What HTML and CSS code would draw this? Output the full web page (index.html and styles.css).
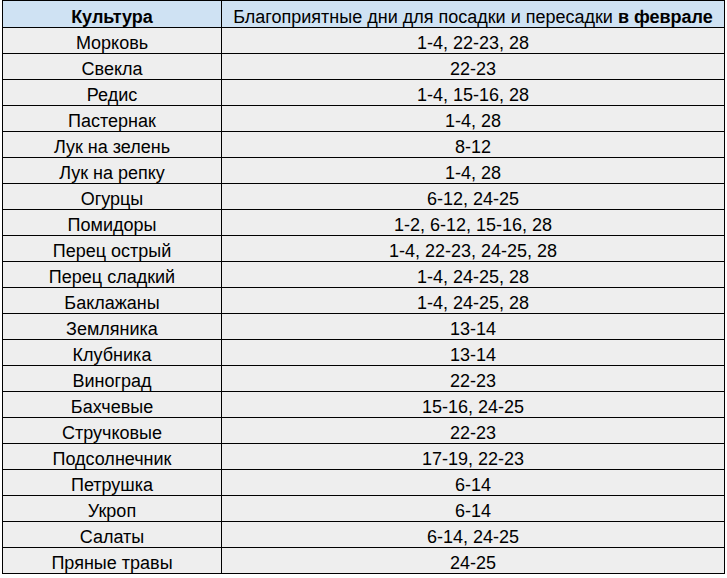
FILE: index.html
```html
<!DOCTYPE html>
<html lang="ru">
<head>
<meta charset="utf-8">
<link rel="stylesheet" href="styles.css">
</head>
<body>
<table class="tbl">
<thead>
<tr><th class="c1">Культура</th><th class="c2">Благоприятные дни для посадки и пересадки <b>в феврале</b></th></tr>
</thead>
<tbody>
<tr><td>Морковь</td><td>1-4, 22-23, 28</td></tr>
<tr><td>Свекла</td><td>22-23</td></tr>
<tr><td>Редис</td><td>1-4, 15-16, 28</td></tr>
<tr><td>Пастернак</td><td>1-4, 28</td></tr>
<tr><td>Лук на зелень</td><td>8-12</td></tr>
<tr><td>Лук на репку</td><td>1-4, 28</td></tr>
<tr><td>Огурцы</td><td>6-12, 24-25</td></tr>
<tr><td>Помидоры</td><td>1-2, 6-12, 15-16, 28</td></tr>
<tr><td>Перец острый</td><td>1-4, 22-23, 24-25, 28</td></tr>
<tr><td>Перец сладкий</td><td>1-4, 24-25, 28</td></tr>
<tr><td>Баклажаны</td><td>1-4, 24-25, 28</td></tr>
<tr><td>Земляника</td><td>13-14</td></tr>
<tr><td>Клубника</td><td>13-14</td></tr>
<tr><td>Виноград</td><td>22-23</td></tr>
<tr><td>Бахчевые</td><td>15-16, 24-25</td></tr>
<tr><td>Стручковые</td><td>22-23</td></tr>
<tr><td>Подсолнечник</td><td>17-19, 22-23</td></tr>
<tr><td>Петрушка</td><td>6-14</td></tr>
<tr><td>Укроп</td><td>6-14</td></tr>
<tr><td>Салаты</td><td>6-14, 24-25</td></tr>
<tr><td>Пряные травы</td><td>24-25</td></tr>
</tbody>
</table>
</body>
</html>
```
FILE: styles.css
```css
html, body {
  margin: 0;
  padding: 0;
  background: #ffffff;
}
body {
  padding: 0 0 0 2px;
  font-family: "Liberation Sans", Arial, sans-serif;
  font-size: 18px;
  color: #000;
}
.tbl {
  border-collapse: collapse;
  width: 723px;
  table-layout: fixed;
}
.tbl th, .tbl td {
  border: 1px solid #000;
  text-align: center;
  padding: 5px 0 0;
  height: 20px;
  line-height: 20px;
  vertical-align: top;
  background: #eeeeee;
  white-space: nowrap;
  overflow: hidden;
}
.tbl th {
  height: 20px;
  padding-top: 6px;
  background: #cfe2f3;
  font-weight: normal;
}
.tbl th.c1 {
  font-weight: bold;
  width: 218px;
}
.tbl th b {
  font-weight: bold;
}
```
